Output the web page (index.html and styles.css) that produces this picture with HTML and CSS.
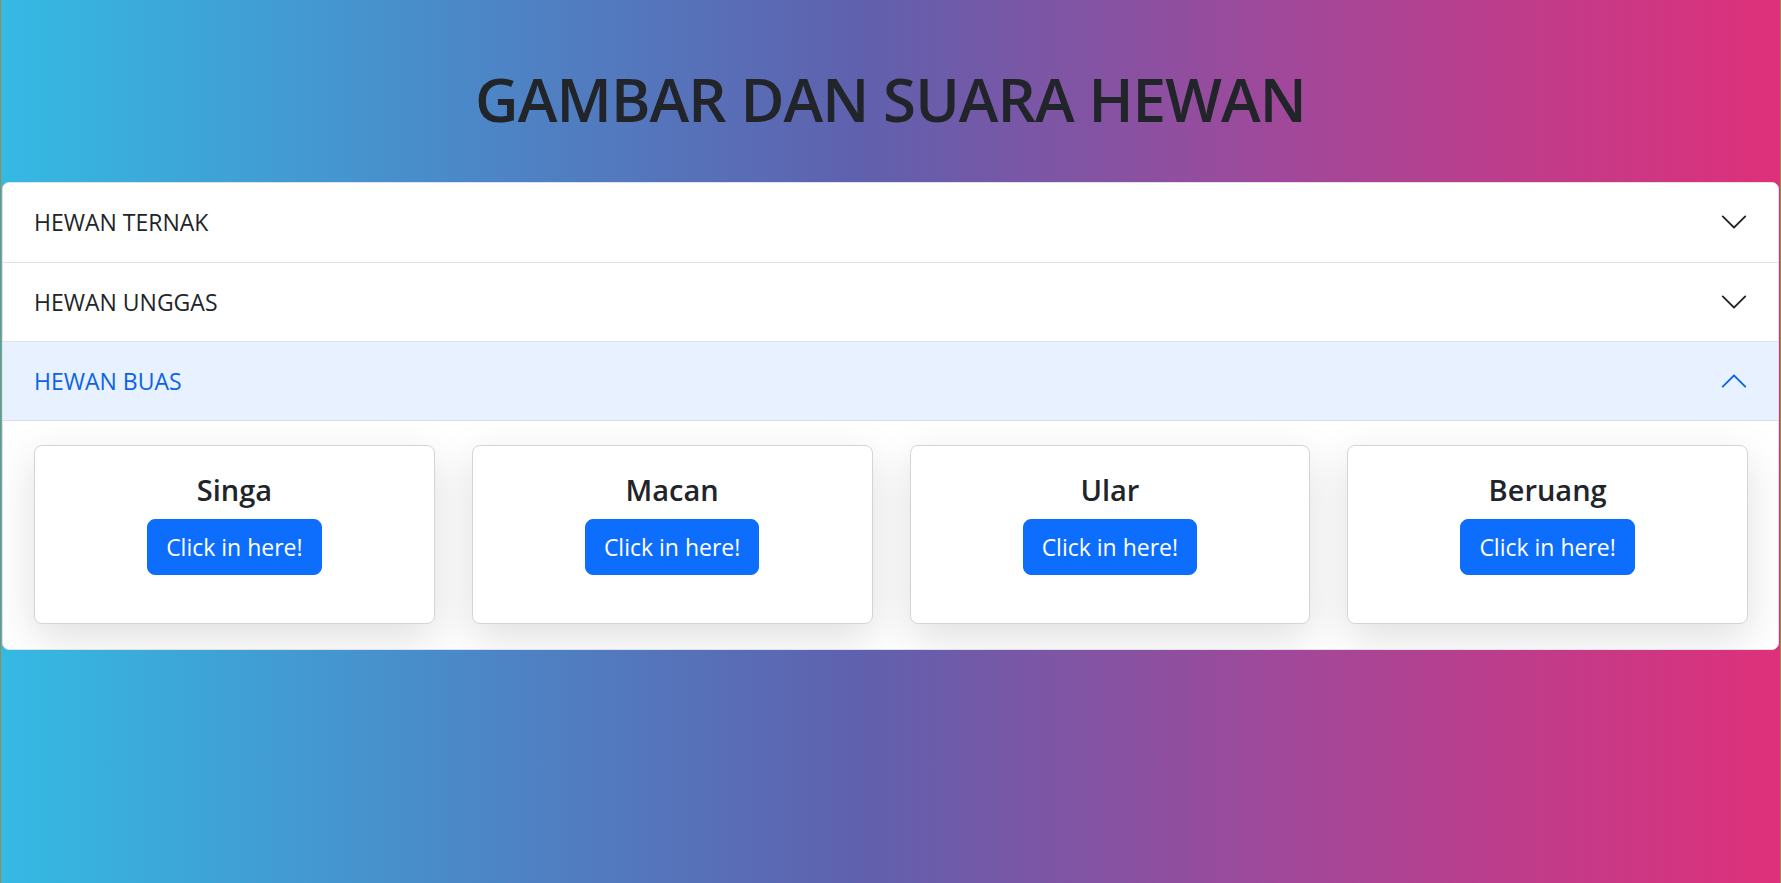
FILE: index.html
```html
<!DOCTYPE html>
<html lang="id">
<head>
<meta charset="utf-8">
<title>Gambar dan Suara Hewan</title>
<link rel="stylesheet" href="styles.css">
</head>
<body>
<main class="page">
  <h1 class="title">GAMBAR DAN SUARA HEWAN</h1>
  <div class="accordion">
    <div class="acc-item">
      <button class="acc-btn" type="button">
        <span>HEWAN TERNAK</span>
        <svg class="chev" viewBox="0 0 16 16" aria-hidden="true"><path fill-rule="evenodd" d="M1.646 4.646a.5.5 0 0 1 .708 0L8 10.293l5.646-5.647a.5.5 0 0 1 .708.708l-6 6a.5.5 0 0 1-.708 0l-6-6a.5.5 0 0 1 0-.708z"/></svg>
      </button>
    </div>
    <div class="acc-item">
      <button class="acc-btn" type="button">
        <span>HEWAN UNGGAS</span>
        <svg class="chev" viewBox="0 0 16 16" aria-hidden="true"><path fill-rule="evenodd" d="M1.646 4.646a.5.5 0 0 1 .708 0L8 10.293l5.646-5.647a.5.5 0 0 1 .708.708l-6 6a.5.5 0 0 1-.708 0l-6-6a.5.5 0 0 1 0-.708z"/></svg>
      </button>
    </div>
    <div class="acc-item">
      <button class="acc-btn active" type="button">
        <span>HEWAN BUAS</span>
        <svg class="chev up" viewBox="0 0 16 16" aria-hidden="true"><path fill-rule="evenodd" d="M1.646 4.646a.5.5 0 0 1 .708 0L8 10.293l5.646-5.647a.5.5 0 0 1 .708.708l-6 6a.5.5 0 0 1-.708 0l-6-6a.5.5 0 0 1 0-.708z"/></svg>
      </button>
      <div class="acc-body">
        <div class="card">
          <h5 class="card-title">Singa</h5>
          <button class="btn" type="button">Click in here!</button>
        </div>
        <div class="card">
          <h5 class="card-title">Macan</h5>
          <button class="btn" type="button">Click in here!</button>
        </div>
        <div class="card">
          <h5 class="card-title">Ular</h5>
          <button class="btn" type="button">Click in here!</button>
        </div>
        <div class="card">
          <h5 class="card-title">Beruang</h5>
          <button class="btn" type="button">Click in here!</button>
        </div>
      </div>
    </div>
  </div>
</main>
</body>
</html>
```

FILE: styles.css
```css
* { box-sizing: border-box; }

html, body {
  margin: 0;
  height: 100%;
}

body {
  font-family: "Open Sans", "Noto Sans", "Liberation Sans", sans-serif;
  color: #212529;
  background: linear-gradient(to right, #34bae4 0%, #4a8ac9 25%, #5f61ae 48%, #a1489a 72%, #df307a 100%);
  border-left: 1px solid #9c8a48;
  border-right: 1px solid #9c8a48;
  min-height: 883px;
}

.page {
  padding: 0 1px;
}

.title {
  margin: 0;
  padding: 63px 0 47px;
  text-align: center;
  font-size: 60px;
  line-height: 72px;
  font-weight: 600;
  letter-spacing: -0.9px;
  color: #212529;
}

.accordion {
  background: #fff;
  border: 1px solid #dee2e6;
  border-radius: 7px;
  overflow: hidden;
}

.acc-item + .acc-item {
  border-top: 1px solid #dee2e6;
}

.acc-btn {
  display: flex;
  align-items: center;
  justify-content: space-between;
  width: 100%;
  margin: 0;
  padding: 22px 29px 22px 31px;
  border: 0;
  background: #fff;
  font-family: inherit;
  font-size: 23px;
  line-height: 34.5px;
  color: #212529;
  text-align: left;
  cursor: pointer;
}

.acc-btn.active {
  background: #e7f1ff;
  color: #0c63e4;
  box-shadow: inset 0 -1px 0 #dadee3;
}

.chev {
  width: 30px;
  height: 30px;
  fill: #212529;
  flex: none;
}

.chev.up {
  fill: #0c63e4;
  transform: rotate(180deg);
}

.acc-body {
  display: grid;
  grid-template-columns: repeat(4, 1fr);
  gap: 37px;
  padding: 24px 30px 25px 31px;
}

.card {
  display: flex;
  flex-direction: column;
  align-items: center;
  background: #fff;
  border: 1px solid #d5d5d5;
  border-radius: 8px;
  padding: 26px 16px 48px;
  box-shadow: 0 14px 44px rgba(0, 0, 0, 0.13);
}

.card-title {
  margin: 0 0 11px;
  font-size: 29px;
  line-height: 36px;
  font-weight: 600;
  color: #212529;
}

.btn {
  font-family: inherit;
  font-size: 23px;
  line-height: 34px;
  color: #fff;
  background: #0d6efd;
  border: 1px solid #0d6efd;
  border-radius: 8px;
  padding: 10px 18px;
  cursor: pointer;
}
```
